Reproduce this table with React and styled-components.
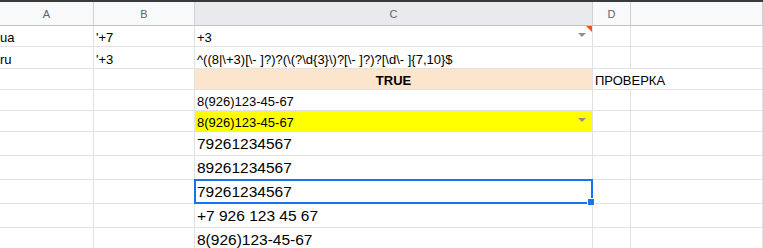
import React from 'react'
import styled, { createGlobalStyle } from 'styled-components'

const GlobalStyle = createGlobalStyle`
  html, body {
    margin: 0;
    padding: 0;
    background: #fff;
    overflow: hidden;
  }
`

const Sheet = styled.div`
  border-top: 2px solid #3a3a3a;
  font-family: "Liberation Sans", Arial, sans-serif;
  color: #000;
`

const Row = styled.div`
  display: grid;
  grid-template-columns: 94px 101px 398px 38px 1fr;
  height: ${p => p.$h}px;
`

const HeadCell = styled.div`
  box-sizing: border-box;
  display: flex;
  align-items: center;
  justify-content: center;
  font-size: 11px;
  color: #5f6368;
  background: ${p => (p.$active ? '#e8eaed' : '#f8f9fa')};
  border-right: 1px solid #d0d0d0;
  border-bottom: 1px solid #c4c4c4;
`

const Cell = styled.div`
  box-sizing: border-box;
  position: relative;
  display: flex;
  align-items: flex-end;
  justify-content: ${p => (p.$center ? 'center' : 'flex-start')};
  padding: 0 2px ${p => (p.$big ? 3 : 1)}px ${p => (p.$flush ? 0 : 2)}px;
  font-size: ${p => (p.$big ? 15.5 : 13)}px;
  line-height: ${p => (p.$big ? 17 : 15)}px;
  font-weight: ${p => (p.$bold ? 700 : 400)};
  white-space: nowrap;
  background: ${p => p.$bg || 'transparent'};
  border-right: 1px solid ${p => (p.$overflow ? 'transparent' : '#e2e2e2')};
  border-bottom: 1px solid #e2e2e2;
`

const Arrow = styled.span`
  position: absolute;
  right: 6px;
  top: 7px;
  width: 0;
  height: 0;
  border-left: 4px solid transparent;
  border-right: 4px solid transparent;
  border-top: 4px solid #8f8f8f;
`

const Corner = styled.span`
  position: absolute;
  top: 0;
  right: 0;
  width: 0;
  height: 0;
  border-left: 6px solid transparent;
  border-top: 6px solid #f4511e;
`

const Selection = styled.span`
  position: absolute;
  top: -1px;
  left: -1px;
  right: -1px;
  bottom: -1px;
  border: 2px solid #1a73e8;
  z-index: 2;
  pointer-events: none;
`

const Handle = styled.span`
  position: absolute;
  right: -4px;
  bottom: -4px;
  width: 6px;
  height: 6px;
  background: #1a73e8;
  border: 1px solid #fff;
  box-sizing: content-box;
`

const regex = '^((8|\\+3)[\\- ]?)?(\\(?\\d{3}\\)?[\\- ]?)?[\\d\\- ]{7,10}$'

const rows = [
  { h: 21, a: 'ua', b: "'+7", c: '+3', arrow: true, corner: true },
  { h: 22, a: 'ru', b: "'+3", c: regex },
  { h: 21, c: 'TRUE', cBg: '#fce5cd', center: true, bold: true, d: 'ПРОВЕРКА' },
  { h: 21, c: '8(926)123-45-67' },
  { h: 21, c: '8(926)123-45-67', cBg: '#ffff00', arrow: true },
  { h: 24, big: true, c: '79261234567' },
  { h: 24, big: true, c: '89261234567' },
  { h: 24, big: true, c: '79261234567', selected: true },
  { h: 24, big: true, c: '+7 926 123 45 67' },
  { h: 24, big: true, c: '8(926)123-45-67' },
]

export default function App() {
  return (
    <>
      <GlobalStyle />
      <Sheet>
        <Row $h={24}>
          <HeadCell>A</HeadCell>
          <HeadCell>B</HeadCell>
          <HeadCell $active>C</HeadCell>
          <HeadCell>D</HeadCell>
          <HeadCell />
        </Row>
        {rows.map((r, i) => (
          <Row key={i} $h={r.h}>
            <Cell $flush $big={r.big}>{r.a}</Cell>
            <Cell $big={r.big}>{r.b}</Cell>
            <Cell $big={r.big} $bg={r.cBg} $center={r.center} $bold={r.bold}>
              {r.c}
              {r.arrow && <Arrow />}
              {r.corner && <Corner />}
              {r.selected && (
                <Selection>
                  <Handle />
                </Selection>
              )}
            </Cell>
            <Cell $big={r.big} $overflow={!!r.d}>{r.d}</Cell>
            <Cell $big={r.big} />
          </Row>
        ))}
      </Sheet>
    </>
  )
}
